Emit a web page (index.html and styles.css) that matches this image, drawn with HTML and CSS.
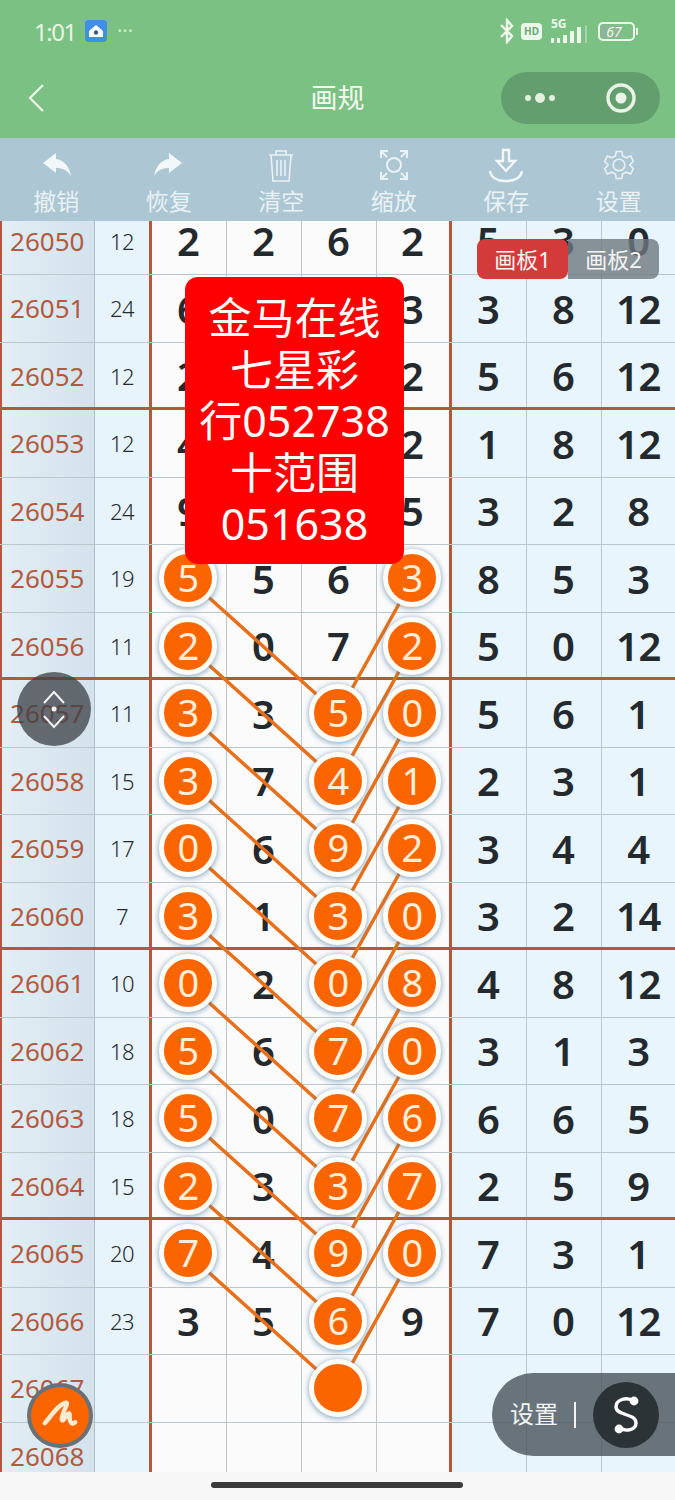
FILE: index.html
```html
<!DOCTYPE html>
<html lang="zh">
<head>
<meta charset="utf-8">
<title>画规</title>
<link rel="stylesheet" href="styles.css">
</head>
<body>
<div class="page">
  <header class="header">
    <div class="status">
      <div class="status-side">
        <span class="time">1:01</span>
        <svg class="app-icon" viewBox="0 0 22 22"><rect width="22" height="22" rx="4" fill="#3f8fe6"/><path d="M11 5 18 11V17H4V11Z" fill="#fff"/><circle cx="11" cy="12.5" r="2.2" fill="#3f5f8a"/></svg>
        <span class="more">···</span>
      </div>
      <div class="status-side">
        <svg class="bt" viewBox="0 0 16 26"><path d="M2 7 13 18 8 24V2L13 8 2 19" fill="none" stroke="#eef8ea" stroke-width="2.4"/></svg>
        <span class="hd">HD</span>
        <span class="signal"><span class="five-g">5G</span><svg class="bars" viewBox="0 0 36 18"><g fill="#eef8ea"><rect x="0" y="13" width="3" height="5"/><rect x="6" y="13" width="3" height="5"/><rect x="12" y="10" width="4" height="8"/><rect x="19" y="6" width="4" height="12"/><rect x="26" y="2" width="4" height="16"/></g><rect x="34" y="0" width="2" height="18" fill="#a6d6a6"/></svg></span>
        <span class="battery"><span class="battery-level">67</span></span>
        <span class="battery-nub"></span>
      </div>
    </div>
    <nav class="nav">
      <svg class="back" viewBox="0 0 18 30"><path d="M16 2 3 15 16 28" fill="none" stroke="#eef8ea" stroke-width="2.2"/></svg>
      <h1 class="title">画规</h1>
      <div class="capsule">
        <span class="dots"><i class="dot"></i><i class="dot big"></i><i class="dot"></i></span>
        <svg class="target" viewBox="0 0 32 32"><circle cx="16" cy="16" r="13" fill="none" stroke="#eaf4e6" stroke-width="3.4"/><circle cx="16" cy="16" r="5.5" fill="#eaf4e6"/></svg>
      </div>
    </nav>
  </header>

  <div class="toolbar">
    <div class="tool">
      <svg class="tool-icon" viewBox="0 0 36 36"><path d="M5 16 18 6V12C26 13 31 19 33 29 29 23 25 21 18 21V26Z" fill="#f2f7f9"/></svg>
      <span class="tool-label">撤销</span>
    </div>
    <div class="tool">
      <svg class="tool-icon" viewBox="0 0 36 36"><path d="M31 16 18 6V12C10 13 5 19 3 29 7 23 11 21 18 21V26Z" fill="#f2f7f9"/></svg>
      <span class="tool-label">恢复</span>
    </div>
    <div class="tool">
      <svg class="tool-icon" viewBox="0 0 36 36"><g fill="none" stroke="#e9f2f5" stroke-width="1.6"><path d="M6 8H30M13 8V4H23V8M8 8 10 34H26L28 8M14 13V29M18 13V29M22 13V29"/></g></svg>
      <span class="tool-label">清空</span>
    </div>
    <div class="tool">
      <svg class="tool-icon" viewBox="0 0 36 36"><g fill="none" stroke="#e9f2f5" stroke-width="2"><circle cx="18" cy="18" r="7"/><path d="M5 11V4H12M5 4 11 10M31 11V4H24M31 4 25 10M5 25V32H12M5 32 11 26M31 25V32H24M31 32 25 26"/></g></svg>
      <span class="tool-label">缩放</span>
    </div>
    <div class="tool">
      <svg class="tool-icon" viewBox="0 0 36 36"><g fill="none" stroke="#f2f7f9" stroke-width="2.4"><path d="M15 3H21V14H27L18 24 9 14H15ZM2 24C3 31 10 34 18 34S33 31 34 24"/></g></svg>
      <span class="tool-label">保存</span>
    </div>
    <div class="tool">
      <svg class="tool-icon" viewBox="0 0 36 36"><g transform="translate(1.8 1.8) scale(.9)" fill="none" stroke="#e9f2f5" stroke-width="1.7"><circle cx="18" cy="18" r="6.5"/><path d="M15 3H21L22 8 26 10 31 8 34 14 30 18 34 22 31 28 26 26 22 28 21 33H15L14 28 10 26 5 28 2 22 6 18 2 14 5 8 10 10 14 8Z"/></g></svg>
      <span class="tool-label">设置</span>
    </div>
  </div>

  <main class="board">
    <div class="rows">
      <div class="row"><div class="id">26050</div><div class="sum">12</div><div class="c">2</div><div class="c">2</div><div class="c">6</div><div class="c">2</div><div class="c r">5</div><div class="c r">3</div><div class="c r">0</div></div>
      <div class="row"><div class="id">26051</div><div class="sum">24</div><div class="c">6</div><div class="c"></div><div class="c"></div><div class="c">3</div><div class="c r">3</div><div class="c r">8</div><div class="c r">12</div></div>
      <div class="row major"><div class="id">26052</div><div class="sum">12</div><div class="c">2</div><div class="c"></div><div class="c"></div><div class="c">2</div><div class="c r">5</div><div class="c r">6</div><div class="c r">12</div></div>
      <div class="row"><div class="id">26053</div><div class="sum">12</div><div class="c">4</div><div class="c"></div><div class="c"></div><div class="c">2</div><div class="c r">1</div><div class="c r">8</div><div class="c r">12</div></div>
      <div class="row"><div class="id">26054</div><div class="sum">24</div><div class="c">9</div><div class="c"></div><div class="c"></div><div class="c">5</div><div class="c r">3</div><div class="c r">2</div><div class="c r">8</div></div>
      <div class="row"><div class="id">26055</div><div class="sum">19</div><div class="c"><span class="ball">5</span></div><div class="c">5</div><div class="c">6</div><div class="c"><span class="ball">3</span></div><div class="c r">8</div><div class="c r">5</div><div class="c r">3</div></div>
      <div class="row major"><div class="id">26056</div><div class="sum">11</div><div class="c"><span class="ball">2</span></div><div class="c">0</div><div class="c">7</div><div class="c"><span class="ball">2</span></div><div class="c r">5</div><div class="c r">0</div><div class="c r">12</div></div>
      <div class="row"><div class="id">26057</div><div class="sum">11</div><div class="c"><span class="ball">3</span></div><div class="c">3</div><div class="c"><span class="ball">5</span></div><div class="c"><span class="ball">0</span></div><div class="c r">5</div><div class="c r">6</div><div class="c r">1</div></div>
      <div class="row"><div class="id">26058</div><div class="sum">15</div><div class="c"><span class="ball">3</span></div><div class="c">7</div><div class="c"><span class="ball">4</span></div><div class="c"><span class="ball">1</span></div><div class="c r">2</div><div class="c r">3</div><div class="c r">1</div></div>
      <div class="row"><div class="id">26059</div><div class="sum">17</div><div class="c"><span class="ball">0</span></div><div class="c">6</div><div class="c"><span class="ball">9</span></div><div class="c"><span class="ball">2</span></div><div class="c r">3</div><div class="c r">4</div><div class="c r">4</div></div>
      <div class="row major"><div class="id">26060</div><div class="sum">7</div><div class="c"><span class="ball">3</span></div><div class="c">1</div><div class="c"><span class="ball">3</span></div><div class="c"><span class="ball">0</span></div><div class="c r">3</div><div class="c r">2</div><div class="c r">14</div></div>
      <div class="row"><div class="id">26061</div><div class="sum">10</div><div class="c"><span class="ball">0</span></div><div class="c">2</div><div class="c"><span class="ball">0</span></div><div class="c"><span class="ball">8</span></div><div class="c r">4</div><div class="c r">8</div><div class="c r">12</div></div>
      <div class="row"><div class="id">26062</div><div class="sum">18</div><div class="c"><span class="ball">5</span></div><div class="c">6</div><div class="c"><span class="ball">7</span></div><div class="c"><span class="ball">0</span></div><div class="c r">3</div><div class="c r">1</div><div class="c r">3</div></div>
      <div class="row"><div class="id">26063</div><div class="sum">18</div><div class="c"><span class="ball">5</span></div><div class="c">0</div><div class="c"><span class="ball">7</span></div><div class="c"><span class="ball">6</span></div><div class="c r">6</div><div class="c r">6</div><div class="c r">5</div></div>
      <div class="row major"><div class="id">26064</div><div class="sum">15</div><div class="c"><span class="ball">2</span></div><div class="c">3</div><div class="c"><span class="ball">3</span></div><div class="c"><span class="ball">7</span></div><div class="c r">2</div><div class="c r">5</div><div class="c r">9</div></div>
      <div class="row"><div class="id">26065</div><div class="sum">20</div><div class="c"><span class="ball">7</span></div><div class="c">4</div><div class="c"><span class="ball">9</span></div><div class="c"><span class="ball">0</span></div><div class="c r">7</div><div class="c r">3</div><div class="c r">1</div></div>
      <div class="row"><div class="id">26066</div><div class="sum">23</div><div class="c">3</div><div class="c">5</div><div class="c"><span class="ball">6</span></div><div class="c">9</div><div class="c r">7</div><div class="c r">0</div><div class="c r">12</div></div>
      <div class="row"><div class="id">26067</div><div class="sum"></div><div class="c"></div><div class="c"></div><div class="c"><span class="ball"></span></div><div class="c"></div><div class="c r"></div><div class="c r"></div><div class="c r"></div></div>
      <div class="row"><div class="id">26068</div><div class="sum"></div><div class="c"></div><div class="c"></div><div class="c"></div><div class="c"></div><div class="c r"></div><div class="c r"></div><div class="c r"></div></div>
    </div>
    <svg class="links" viewBox="0 0 675 1251">
      <path d="M188 357.75 338 492.75M188 425.25 338 560.25M188 492.75 338 627.75M188 560.25 338 695.25M188 627.75 338 762.75M188 695.25 338 830.25M188 762.75 338 897.75M188 830.25 338 965.25M188 897.75 338 1032.75M188 965.25 338 1100.25M188 1032.75 338 1167.75M413 357.75 338 492.75M413 425.25 338 560.25M413 492.75 338 627.75M413 560.25 338 695.25M413 627.75 338 762.75M413 695.25 338 830.25M413 762.75 338 897.75M413 830.25 338 965.25M413 897.75 338 1032.75M413 965.25 338 1100.25M413 1032.75 338 1167.75"/>
    </svg>
  </main>

  <footer class="home-bar"><span class="home-pill"></span></footer>

  <div class="tabs"><span class="tab active">画板1</span><span class="tab">画板2</span></div>

  <div class="promo">金马在线<br>七星彩<br>行052738<br>十范围<br>051638</div>

  <div class="scroller">
    <svg viewBox="0 0 74 74"><g fill="none" stroke="#f2f2f2" stroke-width="2"><path d="M27 31 37 20 47 31M27 44 37 55 47 44"/></g><circle cx="37" cy="37" r="2.5" fill="#f2f2f2"/></svg>
  </div>

  <div class="logo">
    <svg viewBox="0 0 56 56"><path d="M11 36C18 28 27 14 35 13 38 14 30 24 30 32 31 36 35 26 38 25 40 25 37 33 41 36 42 37 44 36 45 35" fill="none" stroke="#fdecd2" stroke-width="5" stroke-linecap="round" stroke-linejoin="round"/></svg>
  </div>

  <div class="settings-pill">
    <span class="settings-text">设置</span>
    <span class="settings-rule"></span>
    <span class="settings-s">
      <svg viewBox="0 0 66 66"><path d="M41 19C33 14 23 18 23 25 23 34 43 31 43 41 43 48 33 50 27 46" fill="none" stroke="#fff" stroke-width="3.4"/><circle cx="41" cy="19" r="4.4" fill="#fff"/><circle cx="26" cy="47" r="4.4" fill="#fff"/></svg>
    </span>
  </div>
</div>
</body>
</html>
```

FILE: styles.css
```css
* { box-sizing: border-box; }
html, body { margin: 0; padding: 0; }
body { font-family: "Noto Sans", "Noto Sans CJK SC", sans-serif; }

.page {
  position: relative;
  width: 675px;
  height: 1500px;
  overflow: hidden;
  display: flex;
  flex-direction: column;
  background: #f7f7f7;
}

/* header */
.header { height: 138px; flex: none; background: #7cc184; color: #eef8ea; }
.status {
  height: 62px;
  padding: 0 37px 0 34px;
  display: flex;
  align-items: center;
  justify-content: space-between;
}
.status-side { display: flex; align-items: center; }
.time { font-size: 24px; width: 51px; color: #e6f6e0; letter-spacing: -1.5px; }
.app-icon { width: 22px; height: 22px; }
.more { margin-left: 10px; font-size: 20px; line-height: 1; color: #cfeccd; }
.bt { width: 16px; height: 26px; }
.hd {
  margin-left: 6px;
  width: 21px;
  height: 17px;
  border-radius: 4px;
  background: #eef8ea;
  color: #6aa877;
  font-size: 10px;
  font-weight: 700;
  line-height: 17px;
  text-align: center;
}
.signal { position: relative; margin-left: 9px; width: 42px; height: 24px; display: block; }
.five-g { position: absolute; left: 0; top: -2px; font-size: 12px; font-weight: 700; line-height: 14px; }
.bars { position: absolute; left: 0; bottom: 0; width: 36px; height: 18px; }
.battery {
  margin-left: 5px;
  width: 37px;
  height: 19px;
  border: 2px solid #eef8ea;
  border-radius: 5px;
  display: flex;
  align-items: center;
  padding: 1px;
}
.battery-level {
  width: 67%;
  height: 100%;
  border-radius: 2px;
  background: #8cb596;
  font-size: 14px;
  font-style: italic;
  line-height: 13px;
  text-align: right;
}
.battery-nub { width: 2px; height: 7px; margin-left: 1px; background: #eef8ea; }

.nav {
  height: 72px;
  display: grid;
  grid-template-columns: 1fr auto 1fr;
  align-items: center;
}
.back { width: 18px; height: 30px; margin-left: 27px; }
.title { margin: 0; font-size: 27px; font-weight: 400; line-height: 36px; color: #f2f9ef; }
.capsule {
  justify-self: end;
  margin-right: 15px;
  width: 159px;
  height: 52px;
  border-radius: 26px;
  background: #629e6e;
  display: flex;
  align-items: center;
  justify-content: space-between;
  padding: 0 23px 0 24px;
}
.dots { display: flex; align-items: center; gap: 4px; }
.dot { width: 6px; height: 6px; border-radius: 50%; background: #e3f1df; }
.dot.big { width: 10px; height: 10px; }
.target { width: 32px; height: 32px; }

/* toolbar */
.toolbar {
  height: 83px;
  flex: none;
  padding-top: 9px;
  background: #acc6d3;
  display: grid;
  grid-template-columns: repeat(6, 112.5px);
}
.tool { display: flex; flex-direction: column; align-items: center; }
.tool-icon { width: 36px; height: 36px; }
.tool-label { margin-top: 3px; font-size: 23px; line-height: 30px; color: #e9f2f5; }

/* board */
.board { position: relative; height: 1251px; flex: none; overflow: hidden; background: #fbfbfb; }
.rows { margin-top: -13.5px; }
.row {
  position: relative;
  height: 67.5px;
  display: grid;
  grid-template-columns: 95px 57px 75px 75px 75px 75px 75px 75px 73px;
  border-bottom: 1.5px solid #bcc6cb;
}
.row.major { border-bottom-color: #b5573a; }
.row.major::after {
  content: "";
  position: absolute;
  left: 0;
  right: 0;
  bottom: -0.5px;
  height: 2.5px;
  background: #b5573a;
}
.id, .sum, .c { display: flex; align-items: center; justify-content: center; }
.id {
  padding-right: 1.5px;
  border-left: 2.5px solid #b5573a;
  border-right: 1.5px solid #aebcc5;
  background: linear-gradient(90deg, #e3eef5, #d3e2ec);
  color: #b15a40;
  font-size: 26px;
}
.sum {
  border-right: 3px solid #b5573a;
  background: #e7f4fc;
  color: #24292e;
  font-size: 22px;
  font-weight: 300;
  letter-spacing: -0.5px;
}
.c {
  padding-right: 1.5px;
  border-right: 1.5px solid #bcc6cb;
  color: #24292e;
  font-size: 40px;
  font-weight: 600;
  letter-spacing: -0.5px;
}
.c:nth-child(6) { border-right: 3px solid #b5573a; }
.c:last-child { border-right: 0; padding-right: 0; }
.c.r { background: #e8f5fc; }
.ball {
  position: relative;
  z-index: 2;
  flex: none;
  width: 58px;
  height: 58px;
  border: 5.5px solid #fffdf8;
  border-radius: 50%;
  background: #fb6500;
  box-shadow: 0 1px 5px 1px rgba(70, 120, 160, 0.55);
  color: #fdeeda;
  font-size: 38px;
  font-weight: 400;
  line-height: 47px;
  text-align: center;
  letter-spacing: 0;
}
.links { position: absolute; left: 0; top: 0; z-index: 1; width: 675px; height: 1251px; pointer-events: none; }
.links path { fill: none; stroke: #e8701a; stroke-width: 3.5; }

.home-bar { flex: 1; display: flex; justify-content: center; padding-top: 10px; background: #f7f7f7; }
.home-pill { width: 252px; height: 6px; border-radius: 3px; background: #3a3a3a; margin-right: 1px; }

/* floating overlays */
.tabs { position: absolute; z-index: 5; left: 477px; top: 239px; display: flex; }
.tab {
  width: 91px;
  height: 40px;
  background: rgba(110, 120, 126, 0.8);
  border-radius: 0 8px 8px 0;
  color: #f5f5f5;
  font-size: 22px;
  line-height: 40px;
  text-align: center;
}
.tab.active { background: #d33a3a; border-radius: 8px; }

.promo {
  position: absolute;
  z-index: 6;
  left: 185px;
  top: 277px;
  width: 219px;
  height: 287px;
  padding-top: 15px;
  border-radius: 13px;
  background: #fe0000;
  color: #fff;
  font-size: 43px;
  line-height: 51.5px;
  text-align: center;
  white-space: nowrap;
}

.scroller {
  position: absolute;
  z-index: 5;
  left: 17px;
  top: 672px;
  width: 74px;
  height: 74px;
  border-radius: 50%;
  background: rgba(60, 65, 70, 0.76);
}
.scroller svg { display: block; width: 74px; height: 74px; }

.logo {
  position: absolute;
  z-index: 5;
  left: 27px;
  top: 1383px;
  width: 66px;
  height: 65px;
  padding: 4px;
  border: 4px solid #6a7175;
  border-radius: 50%;
  background: #fb6500;
}
.logo svg { display: block; width: 50px; height: 50px; margin: 0 auto; }

.settings-pill {
  position: absolute;
  z-index: 5;
  left: 492px;
  top: 1373px;
  width: 183px;
  height: 83px;
  border-radius: 41.5px 0 0 41.5px;
  background: rgba(72, 82, 90, 0.8);
  display: flex;
  align-items: center;
  padding-left: 18px;
}
.settings-text { width: 48px; color: #f4f4f4; font-size: 24px; line-height: 30px; margin-top: -2px; white-space: nowrap; }
.settings-rule { width: 2px; height: 26px; margin-left: 16px; background: #f4f4f4; }
.settings-s { width: 66px; height: 66px; margin-left: 17px; border-radius: 50%; background: #2c3336; }
.settings-s svg { display: block; width: 66px; height: 66px; }
```
